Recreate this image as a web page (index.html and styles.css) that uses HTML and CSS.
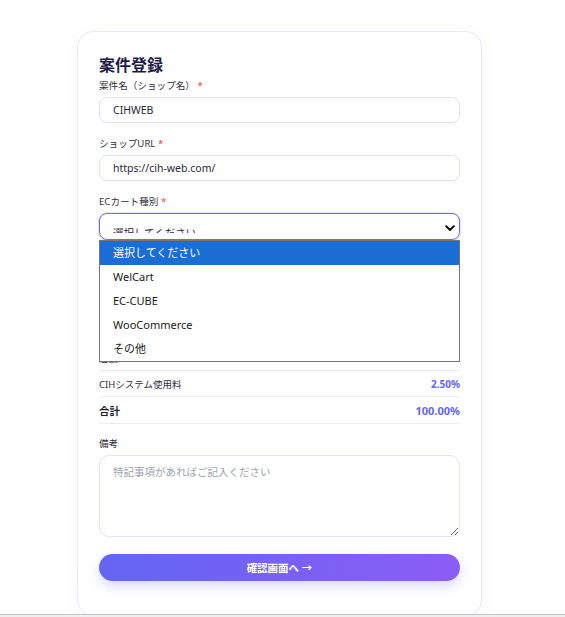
FILE: index.html
```html
<!DOCTYPE html>
<html lang="ja">
<head>
<meta charset="utf-8">
<title>案件登録</title>
<link rel="stylesheet" href="styles.css">
</head>
<body>
<main class="card">
  <h1 class="title">案件登録</h1>

  <div class="field">
    <label class="label">案件名（ショップ名） <span class="req">*</span></label>
    <input class="input" type="text" value="CIHWEB">
  </div>

  <div class="field">
    <label class="label">ショップURL <span class="req">*</span></label>
    <input class="input" type="text" value="https://cih-web.com/">
  </div>

  <div class="field field-select">
    <label class="label">ECカート種別 <span class="req">*</span></label>
    <div class="select-wrap">
      <div class="select">
        <span class="select-text">選択してください</span>
        <svg class="chevron" width="10" height="7" viewBox="0 0 10 7"><path d="M1.2 1.2 L5 5 L8.8 1.2" fill="none" stroke="#111" stroke-width="2" stroke-linecap="round" stroke-linejoin="round"/></svg>
      </div>
      <ul class="dropdown">
        <li class="option selected">選択してください</li>
        <li class="option">WelCart</li>
        <li class="option">EC-CUBE</li>
        <li class="option">WooCommerce</li>
        <li class="option">その他</li>
      </ul>
    </div>
  </div>

  <div class="fees">
    <div class="fee-row"></div>
    <div class="fee-row"></div>
    <div class="fee-row"></div>
    <div class="fee-row"><span>店舗</span><span class="val">90.00%</span></div>
    <div class="fee-row"><span>CIHシステム使用料</span><span class="val">2.50%</span></div>
    <div class="fee-row total"><span>合計</span><span class="val">100.00%</span></div>
  </div>

  <div class="field field-notes">
    <label class="label">備考</label>
    <textarea class="textarea" placeholder="特記事項があればご記入ください"></textarea>
  </div>

  <button class="submit" type="button">確認画面へ →</button>
</main>
<div class="bottom-bar"></div>
</body>
</html>
```

FILE: styles.css
```css
* { box-sizing: border-box; }

html, body {
  margin: 0;
  padding: 0;
  background: #ffffff;
}

body {
  font-family: "Noto Sans", "Noto Sans CJK JP", sans-serif;
  color: #1f2937;
}

.card {
  width: 405px;
  margin: 31px 0 0 77px;
  padding: 22px 21px 34px;
  background: #ffffff;
  border: 1px solid #e8e6fa;
  border-radius: 16px;
  box-shadow: 0 4px 18px rgba(99, 102, 241, 0.04);
}

.title {
  margin: 0 0 3px;
  font-size: 16px;
  line-height: 22px;
  font-weight: 700;
  color: #1e1b4b;
}

.field {
  display: flex;
  flex-direction: column;
  margin-bottom: 14px;
}

.label {
  font-size: 9.6px;
  line-height: 14px;
  color: #2f2f3a;
  margin-bottom: 4px;
}

.req {
  color: #ef4444;
}

.input {
  height: 26px;
  border: 1px solid #e3e2f5;
  border-radius: 8px;
  padding: 0 13px;
  font-family: inherit;
  font-size: 10.5px;
  color: #1f2937;
  background: #fff;
  box-shadow: 0 1px 2px rgba(99, 102, 241, 0.04);
  outline: none;
}

.field-select {
  margin-bottom: 0;
}

.select-wrap {
  position: relative;
}

.select {
  height: 27px;
  border: 1px solid #6c6ee8;
  border-radius: 8px;
  box-shadow: 0 0 0 1px rgba(99, 102, 241, 0.18);
  display: flex;
  align-items: flex-start;
  justify-content: space-between;
  padding: 11px 4px 0 13px;
  background: #fff;
}

.select-text {
  display: block;
  height: 8px;
  overflow: hidden;
  font-size: 10.5px;
  line-height: 16px;
  color: #1f2937;
}

.chevron {
  margin-top: 0;
}

.dropdown {
  position: absolute;
  top: 100%;
  left: 0;
  right: 0;
  margin: 0;
  padding: 0;
  list-style: none;
  background: #ffffff;
  border: 1px solid #767676;
  z-index: 10;
}

.option {
  height: 24px;
  line-height: 24px;
  padding-left: 13px;
  font-size: 11px;
  color: #1a1a1a;
}

.option.selected {
  background: #1a6dd3;
  color: #ffffff;
}

.fees {
  margin-top: 27px;
  display: flex;
  flex-direction: column;
}

.fee-row {
  height: 26px;
  display: flex;
  align-items: center;
  justify-content: space-between;
  border-bottom: 1px solid #ecebf7;
  font-size: 9.5px;
  color: #2f2f3a;
}

.fee-row .val {
  font-weight: 700;
  color: #6366f1;
  font-size: 10px;
}

.fee-row.total {
  height: 27px;
  font-size: 10.5px;
  font-weight: 700;
  color: #1f1f2e;
}

.fee-row.total .val {
  font-size: 11px;
}

.field-notes {
  margin-top: 13px;
  margin-bottom: 0;
}

.textarea {
  height: 82px;
  border: 1px solid #e3e2f5;
  border-radius: 10px;
  padding: 8px 13px;
  font-family: inherit;
  font-size: 10.5px;
  color: #1f2937;
  background: #fff;
  resize: vertical;
  outline: none;
}

.textarea::placeholder {
  color: #9ca3af;
}

.submit {
  display: block;
  width: 100%;
  height: 27px;
  margin-top: 17px;
  border: none;
  border-radius: 14px;
  background: linear-gradient(90deg, #6366f1 0%, #8b5cf6 100%);
  color: #ffffff;
  font-family: inherit;
  font-size: 10.5px;
  font-weight: 700;
  box-shadow: 0 5px 12px rgba(99, 102, 241, 0.25);
}

.bottom-bar {
  position: fixed;
  left: 0;
  right: 0;
  bottom: 0;
  height: 3px;
  border-top: 1px solid #c2c2c2;
  background: #f0f0f0;
}
```
